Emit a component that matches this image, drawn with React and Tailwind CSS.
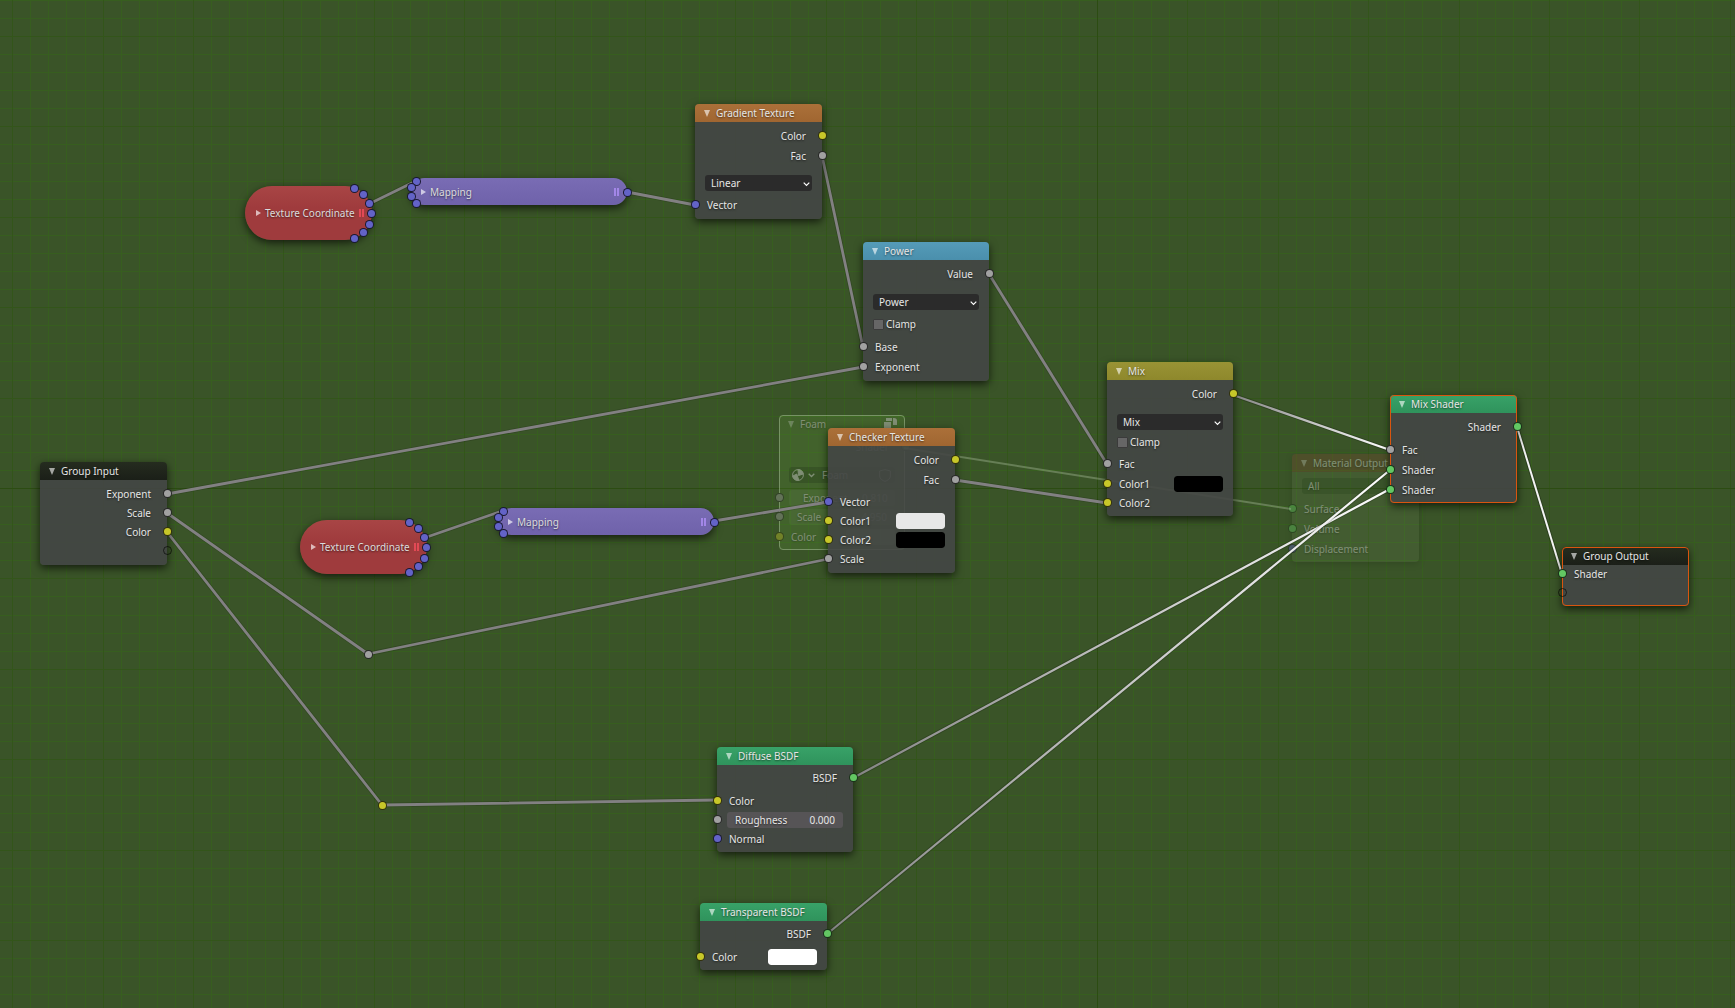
import React, { useId } from 'react'

const ORIGIN_X = 1097
const ORIGIN_Y = 488
const STEP = 18.08

const socketColors = {
  yellow: 'border-black/75 bg-[#c7c729]',
  gray: 'border-black/75 bg-[#a1a1a1]',
  blue: 'border-black/75 bg-[#6363c7]',
  green: 'border-black/75 bg-[#63c763]',
  empty: 'border-black/60 bg-transparent',
}

const links = [
  { points: '371,203 416,181' },
  { points: '627,192 695,205' },
  { points: '822,156 863,347' },
  { points: '167,494 863,367' },
  { points: '989,274 1107,464' },
  { points: '167,513 368,654 828,559' },
  { points: '167,532 382,805 717,800' },
  { points: '427,537 502,511' },
  { points: '714,521 828,502' },
  { points: '955,480 1107,503' },
]

const activeLinks = [
  { id: 'mix', x1: 1233, y1: 395, x2: 1390, y2: 450 },
  { id: 'diffuse', x1: 853, y1: 778, x2: 1390, y2: 489 },
  { id: 'transparent', x1: 827, y1: 934, x2: 1390, y2: 470 },
]

function Grid() {
  const lines = []
  for (let i = -62; i <= 60; i++) {
    lines.push(i)
  }
  const major = lines.filter((i) => i % 5 === 0)
  const minor = lines.filter((i) => i % 5 !== 0)
  const draw = (i) => (
    <g key={i}>
      <line x1={Math.round(ORIGIN_X + i * STEP) + 0.5} x2={Math.round(ORIGIN_X + i * STEP) + 0.5} y1="0" y2="100%" />
      <line y1={Math.round(ORIGIN_Y + i * STEP) + 0.5} y2={Math.round(ORIGIN_Y + i * STEP) + 0.5} x1="0" x2="100%" />
    </g>
  )
  return (
    <svg className="absolute inset-0 h-full w-full" aria-hidden="true">
      <g stroke="#375e1f">{minor.map(draw)}</g>
      <g stroke="#33551a">{major.map(draw)}</g>
      <g stroke="#2c4c12">{draw(0)}</g>
    </svg>
  )
}

function Links() {
  return (
    <svg className="absolute inset-0 h-full w-full" fill="none" aria-hidden="true">
      <defs>
        {activeLinks.map((l) => (
          <linearGradient key={l.id} id={l.id} gradientUnits="userSpaceOnUse" x1={l.x1} y1={l.y1} x2={l.x2} y2={l.y2}>
            <stop offset="0" stopColor="#858585" />
            <stop offset="1" stopColor="#ffffff" />
          </linearGradient>
        ))}
      </defs>
      <line x1="904" y1="448" x2="1291" y2="509" stroke="#a9bf9c" strokeWidth="2" opacity="0.4" />
      {links.map((l) => (
        <g key={l.points} strokeLinejoin="round">
          <polyline points={l.points} stroke="#000000" strokeOpacity="0.15" strokeWidth="4.4" />
          <polyline points={l.points} stroke="#828082" strokeWidth="2.8" />
        </g>
      ))}
      {activeLinks.map((l) => (
        <g key={l.id}>
          <line x1={l.x1} y1={l.y1} x2={l.x2} y2={l.y2} stroke="#000000" strokeOpacity="0.2" strokeWidth="4" />
          <line x1={l.x1} y1={l.y1} x2={l.x2} y2={l.y2} stroke={`url(#${l.id})`} strokeWidth="2.2" />
        </g>
      ))}
      <line x1="1517" y1="427" x2="1562" y2="574" stroke="#000000" strokeOpacity="0.25" strokeWidth="4" />
      <line x1="1517" y1="427" x2="1562" y2="574" stroke="#f4f4f4" strokeWidth="2" />
    </svg>
  )
}

function Socket({ color, side }) {
  const place = side === 'right' ? '-right-[5px]' : '-left-[4px]'
  return (
    <span className={`absolute ${place} top-1/2 -mt-[5px] size-[9px] rounded-full border ${socketColors[color]}`} />
  )
}

function Triangle() {
  return (
    <svg viewBox="0 0 6 7" className="h-[7px] w-[6px]" fill="currentColor">
      <path d="M0 0h6L3 7z" />
    </svg>
  )
}

function Node({ title, place, header, body = 'bg-[#444645]/90', frame = 'shadow-[0_3px_8px_rgba(0,0,0,0.65)]', pad = 'py-1', icon, children }) {
  return (
    <section className={`absolute rounded-[4px] ${place} ${frame}`}>
      <header className={`flex h-[18px] items-center rounded-t-[4px] pl-[9px] bg-linear-to-b ${header}`}>
        <button type="button" className="flex w-[12px] text-white/60" aria-label={title}>
          <Triangle />
        </button>
        <h2>{title}</h2>
        {icon}
      </header>
      <div className={`rounded-b-[4px] ${pad} ${body}`}>{children}</div>
    </section>
  )
}

function Output({ label, color, h = 'h-5' }) {
  return (
    <div className={`relative flex items-center justify-end pr-4 ${h}`}>
      {label}
      <Socket side="right" color={color} />
    </div>
  )
}

function Input({ label, color, swatch, h = 'h-5', gap = '' }) {
  const id = useId()
  return (
    <div className={`relative flex items-center justify-between pl-3 pr-[10px] ${h} ${gap}`}>
      <Socket side="left" color={color} />
      {swatch ? <label htmlFor={id}>{label}</label> : <span>{label}</span>}
      {swatch && (
        <input
          id={id}
          type="color"
          defaultValue={swatch}
          className="h-4 w-[49px] appearance-none overflow-hidden rounded-[3px] border-0 bg-transparent p-0 [&::-webkit-color-swatch]:rounded-[3px] [&::-webkit-color-swatch]:border-0 [&::-webkit-color-swatch-wrapper]:p-0"
        />
      )}
    </div>
  )
}

function Dropdown({ value, gap = 'mt-[6px]', h = 'h-6' }) {
  return (
    <div className={`flex items-center px-[10px] ${h} ${gap}`}>
      <div className="relative w-full">
        <select aria-label={value} className="block h-4 w-full appearance-none rounded-[3px] bg-[#2b2b2b] pl-[6px] outline-none">
          <option>{value}</option>
        </select>
        <svg viewBox="0 0 7 5" className="pointer-events-none absolute right-[2px] top-[7px] h-[5px] w-[7px]" fill="none" stroke="#fff" strokeWidth="1.2">
          <path d="M.7.7l2.8 2.8L6.3.7" />
        </svg>
      </div>
    </div>
  )
}

function Clamp({ h = 'h-5' }) {
  return (
    <label className={`flex items-center gap-[2px] px-[10px] ${h}`}>
      <input type="checkbox" className="size-[11px] appearance-none rounded-[1px] border border-[#3b3b3b] bg-[#666666]" />
      Clamp
    </label>
  )
}

function NumberField({ label, value, color, look = 'bg-[#565456]', h = 'h-[19px]' }) {
  const id = useId()
  return (
    <div className={`relative flex items-center px-[10px] ${h}`}>
      <Socket side="left" color={color} />
      <div className={`flex h-4 w-full items-center justify-between rounded-[3px] px-2 ${look}`}>
        <label htmlFor={id}>{label}</label>
        <input id={id} defaultValue={value} className="w-10 bg-transparent text-right outline-none" />
      </div>
    </div>
  )
}

/* collapsed nodes keep their sockets around the rounded ends */
function HiddenNode({ title, place, look, bars, pad, sockets }) {
  return (
    <section className={`absolute flex items-center rounded-full bg-linear-to-b shadow-[0_3px_8px_rgba(0,0,0,0.65)] ${place} ${look} ${pad}`}>
      <button type="button" className="flex w-[9px] text-white/65" aria-label={title}>
        <svg viewBox="0 0 5 6" className="h-[6px] w-[5px]" fill="currentColor">
          <path d="M0 0v6l5-3z" />
        </svg>
      </button>
      <h2 className="grow text-[#dcdcdc]">{title}</h2>
      <svg viewBox="0 0 5 8" className={`h-2 w-[5px] ${bars}`} stroke="currentColor" strokeWidth="1.4">
        <path d="M1 0v8M4 0v8" />
      </svg>
      {sockets.map(([x, y]) => (
        <span
          key={`${x}-${y}`}
          className="absolute -ml-[4px] -mt-[4px] size-[9px] rounded-full border border-black/75 bg-[#6363c7]"
          style={{ left: x, top: y }}
        />
      ))}
    </section>
  )
}

const coordinateSockets = [[109, 2], [118, 8], [124, 17], [126, 27], [124, 38], [118, 46], [109, 52]]
const mappingSockets = [[5, 3], [0, 9], [0, 18], [5, 25], [216, 14]]

function FoamNode() {
  return (
    <div className="opacity-40">
      <Node
        title="Foam"
        place="left-[779px] top-[415px] w-[126px]"
        header="from-[#6fb040]/40 to-[#6fb040]/40"
        body="bg-[#6fb040]/40"
        frame="outline outline-[#d4f0c0] -outline-offset-1"
        icon={
          <svg viewBox="0 0 13 12" className="ml-auto mr-2 h-3 w-[13px]" fill="currentColor">
            <path d="M2 0h6v3H2zM0 4h7v8H0zM9 0h1a3 3 0 0 1 3 3v4H9z" />
          </svg>
        }
      >
        <Output label="Shader" color="green" />
        <div className="mx-[10px] mt-[10px] mb-[5px] flex h-4 items-center rounded-[3px] bg-[#26401a]/60">
          <svg viewBox="0 0 12 12" className="ml-[3px] h-3 w-3" fill="none" stroke="currentColor">
            <circle cx="6" cy="6" r="5.4" />
            <path d="M6 .6a5.4 5.4 0 0 1 5.2 4.4L6.5 6.500zM.8 7l4-2 2 6.200C4 12 1 10 .8 7z" fill="currentColor" />
          </svg>
          <svg viewBox="0 0 7 5" className="ml-1 h-[5px] w-[7px]" fill="none" stroke="currentColor" strokeWidth="1.3">
            <path d="M.7.7l2.800 2.800L6.300.7" />
          </svg>
          <span className="ml-[7px] grow">Foam</span>
          <svg viewBox="0 0 12 13" className="mr-1 h-[13px] w-3" fill="none" stroke="currentColor">
            <path d="M6 .6L11.400 2v5c0 3-3 4.500-5.400 5.400C3.600 11.500.6 10 .6 7V2z" />
          </svg>
        </div>
        <NumberField label="Exponent" value="0.810" color="gray" look="bg-[#8fb07c]/25 pl-[14px]" />
        <NumberField label="Scale" value="4.950" color="gray" look="bg-[#8fb07c]/25" h="h-5" />
        <Input label="Color" color="yellow" swatch="#84a070" h="h-[19px]" />
      </Node>
    </div>
  )
}

function MaterialOutputNode() {
  return (
    <div className="opacity-40">
      <Node
        title="Material Output"
        place="left-[1292px] top-[454px] w-[127px]"
        header="from-[#a03c34]/50 to-[#a03c34]/50"
        body="bg-[#dfe8c8]/15"
        frame="shadow-[0_2px_6px_rgba(0,0,0,0.3)]"
      >
        <div className="mx-[10px] mt-[2px] mb-[5px] flex h-4 items-center rounded-[3px] bg-[#26401a]/50 pl-[6px]">All</div>
        <Input label="Surface" color="green" />
        <Input label="Volume" color="green" />
        <Input label="Displacement" color="blue" h="h-[19px]" />
      </Node>
    </div>
  )
}

export default function App() {
  return (
    <main className='relative min-h-screen w-full overflow-hidden bg-[#3a5428] font-["Noto_Sans",sans-serif] text-[10px] leading-4 text-[#e6e6e6] [text-shadow:0_1px_2px_rgba(0,0,0,0.55)]'>
      <Grid />
      <FoamNode />
      <MaterialOutputNode />
      <Links />

      <HiddenNode
        title="Texture Coordinate"
        place="left-[245px] top-[186px] h-[54px] w-[127px]"
        look="from-[#a84545] to-[#9f3b3d] to-40%"
        bars="text-[#ff5060]"
        pad="pl-[11px] pr-2"
        sockets={coordinateSockets}
      />
      <HiddenNode
        title="Texture Coordinate"
        place="left-[300px] top-[520px] h-[54px] w-[127px]"
        look="from-[#a84545] to-[#9f3b3d] to-40%"
        bars="text-[#ff5060]"
        pad="pl-[11px] pr-2"
        sockets={coordinateSockets}
      />
      <HiddenNode
        title="Mapping"
        place="left-[411px] top-[178px] h-[27px] w-[216px]"
        look="from-[#796cb4] to-[#6f62aa]"
        bars="text-[#b795ff]"
        pad="pl-[10px] pr-2"
        sockets={mappingSockets}
      />
      <HiddenNode
        title="Mapping"
        place="left-[498px] top-[508px] h-[27px] w-[216px]"
        look="from-[#796cb4] to-[#6f62aa]"
        bars="text-[#b795ff]"
        pad="pl-[10px] pr-2"
        sockets={mappingSockets}
      />

      <Node title="Gradient Texture" place="left-[695px] top-[104px] w-[127px]" header="from-[#ab7039] to-[#a06631]">
        <Output label="Color" color="yellow" />
        <Output label="Fac" color="gray" />
        <Dropdown value="Linear" gap="mt-[5px]" />
        <Input label="Vector" color="blue" />
      </Node>

      <Node title="Power" place="left-[863px] top-[242px] w-[126px]" header="from-[#559bb8] to-[#4a8fac]">
        <Output label="Value" color="gray" />
        <Dropdown value="Power" />
        <Clamp />
        <Input label="Base" color="gray" gap="mt-[3px]" />
        <Input label="Exponent" color="gray" />
      </Node>

      <Node title="Mix" place="left-[1107px] top-[362px] w-[126px]" header="from-[#999335] to-[#8e882c]">
        <Output label="Color" color="yellow" />
        <Dropdown value="Mix" />
        <Clamp h="h-4" />
        <Input label="Fac" color="gray" gap="mt-1" />
        <Input label="Color1" color="yellow" swatch="#000000" h="h-[19px]" />
        <Input label="Color2" color="yellow" h="h-[19px]" />
      </Node>

      <Node title="Checker Texture" place="left-[828px] top-[428px] w-[127px]" header="from-[#ab7039] to-[#a06631]">
        <Output label="Color" color="yellow" />
        <Output label="Fac" color="gray" />
        <Input label="Vector" color="blue" h="h-[19px]" gap="mt-[2px]" />
        <Input label="Color1" color="yellow" swatch="#e7e7e7" h="h-[19px]" />
        <Input label="Color2" color="yellow" swatch="#000000" h="h-[19px]" />
        <Input label="Scale" color="gray" h="h-5" />
      </Node>

      <Node
        title="Mix Shader"
        place="left-[1390px] top-[395px] w-[127px]"
        header="from-[#38a268] to-[#2f935c]"
        frame="shadow-[0_3px_8px_rgba(0,0,0,0.65)] outline outline-[#d9550f] -outline-offset-1"
      >
        <Output label="Shader" color="green" />
        <Input label="Fac" color="gray" gap="mt-[3px]" />
        <Input label="Shader" color="green" />
        <Input label="Shader" color="green" h="h-[19px]" />
      </Node>

      <Node
        title="Group Output"
        place="left-[1562px] top-[547px] w-[127px]"
        header="from-[#252c1f] to-[#1b1f18]"
        pad="pb-1"
        frame="shadow-[0_3px_8px_rgba(0,0,0,0.65)] outline outline-[#d9550f] -outline-offset-1"
      >
        <Input label="Shader" color="green" h="h-[18px]" />
        <Input label="" color="empty" h="h-[19px]" />
      </Node>

      <Node title="Group Input" place="left-[40px] top-[462px] w-[127px]" header="from-[#252c1f] to-[#1b1f18]">
        <Output label="Exponent" color="gray" h="h-[19px]" />
        <Output label="Scale" color="gray" h="h-[19px]" />
        <Output label="Color" color="yellow" h="h-[19px]" />
        <Output label="" color="empty" h="h-5" />
      </Node>

      <Node title="Diffuse BSDF" place="left-[717px] top-[747px] w-[136px]" header="from-[#38a268] to-[#2f935c]">
        <Output label="BSDF" color="green" h="h-[18px]" />
        <Input label="Color" color="yellow" h="h-[19px]" gap="mt-1" />
        <NumberField label="Roughness" value="0.000" color="gray" />
        <Input label="Normal" color="blue" h="h-[19px]" />
      </Node>

      <Node title="Transparent BSDF" place="left-[700px] top-[903px] w-[127px]" header="from-[#38a268] to-[#2f935c]">
        <Output label="BSDF" color="green" h="h-[18px]" />
        <Input label="Color" color="yellow" swatch="#ffffff" h="h-[19px]" gap="mt-1" />
      </Node>

      {/* reroute points */}
      <span className="absolute left-[364px] top-[650px] size-[9px] rounded-full border border-black/75 bg-[#a1a1a1]" />
      <span className="absolute left-[378px] top-[801px] size-[9px] rounded-full border border-black/75 bg-[#c7c729]" />
    </main>
  )
}
